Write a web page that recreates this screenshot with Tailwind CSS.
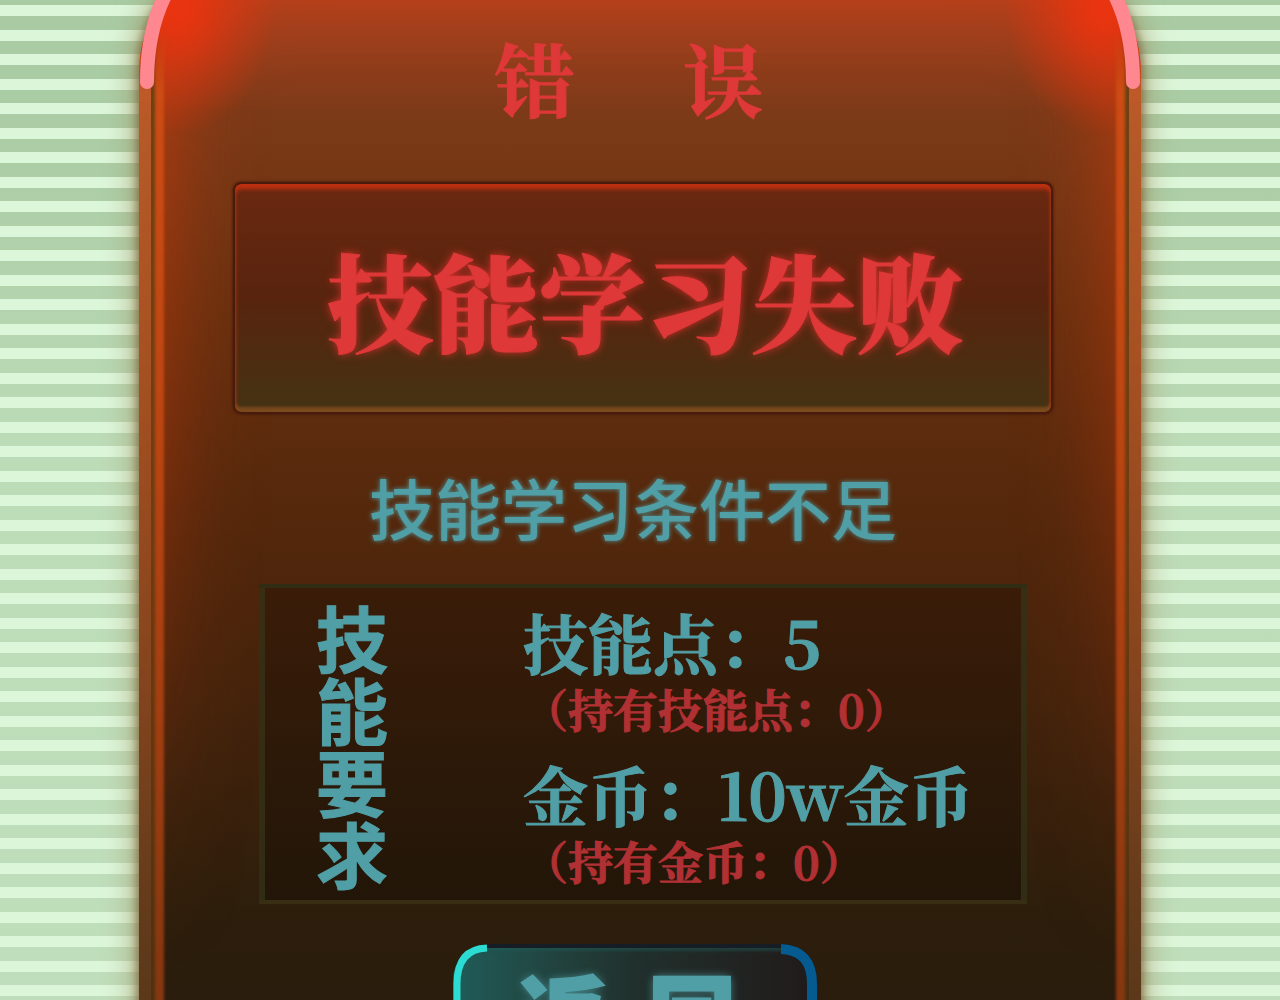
<!DOCTYPE html>
<html lang="zh-CN">
<head>
  <meta charset="UTF-8" />
  <title>技能学习失败</title>
  <meta name="viewport" content="width=device-width, initial-scale=1.0" />
  <script src="https://cdn.jsdelivr.net/npm/@tailwindcss/browser@4"></script>
</head>
<body class="min-h-screen overflow-x-hidden bg-[#dcf6d9] bg-[linear-gradient(to_bottom,#a9cba3_0px,#a9cba3_5px,#dcf6d9_5px,#dcf6d9_16px,#a9cba3_16px,#a9cba3_30px,#dcf6d9_30px,#dcf6d9_41px,#a9cba3_41px,#a9cba3_49px)] bg-[length:100%_49px] font-['Noto_Serif_CJK_SC','Liberation_Serif','Noto_Sans_CJK_SC',serif]">

  <div class="min-h-screen overflow-hidden bg-[linear-gradient(to_bottom,#dcf6d900_0px,#dcf6d910_180px,#dcf6d960_450px,#dcf6d970_1000px)]">

    <!-- dialog -->
    <main class="relative mx-auto -mt-12 w-full max-w-[1002px] rounded-t-[120px] bg-[linear-gradient(to_bottom,#ac4220_48px,#7c3a18_160px,#68300f_360px,#55280c_560px,#43230c_760px,#2d1e0c_960px,#2a1c0c_1060px)] pt-12 pr-[88px] pl-[94px] shadow-[0_0_8px_2px_#7a6238cc,0_0_26px_8px_#a08a5a90]">

      <!-- side glow -->
      <div class="absolute inset-0 rounded-t-[120px] shadow-[inset_0_0_90px_24px_#d03c0cd0] mask-[linear-gradient(to_bottom,#000_15%,#0009_45%,#0002_75%,#0000_90%)]"></div>
      <div class="absolute inset-0 rounded-t-[120px] bg-[radial-gradient(ellipse_100px_130px_at_38px_54px,#e83410_10%,#e8341080_50%,#e8341000),radial-gradient(ellipse_100px_130px_at_964px_54px,#e83410_10%,#e8341080_50%,#e8341000)]"></div>

      <!-- side rails -->
      <div class="absolute inset-0 rounded-t-[120px] border-x-[12px] border-[#c07038]/60 shadow-[inset_4px_0_3px_#6a4214,inset_-4px_0_3px_#6a4214,inset_13px_0_3px_#cc4c14,inset_-13px_0_3px_#cc4c14] mask-[linear-gradient(to_bottom,#0000_80px,#000_140px,#000b_50%,#0008_100%)]"></div>

      <!-- lit corners -->
      <svg class="absolute top-12 left-0 h-[100px] w-[60px]" viewBox="0 0 60 100" fill="none" stroke="#ff8790" stroke-width="14" stroke-linecap="round"><path d="M8 82C8 46 14 16 30 -12" /></svg>
      <svg class="absolute top-12 right-0 h-[100px] w-[60px]" viewBox="0 0 60 100" fill="none" stroke="#ff8790" stroke-width="14" stroke-linecap="round"><path d="M52 82C52 46 46 16 30 -12" /></svg>

      <div class="relative flex flex-col items-center">
        <h2 class="flex gap-27 pt-8 pr-7 text-[80px] leading-[90px] font-bold text-[#de3838] [-webkit-text-stroke:1px]"><span>错</span><span>误</span></h2>

        <div class="mt-[60px] flex h-[232px] w-full items-center justify-center rounded-lg border-2 border-[#4a1b0c] bg-linear-to-b from-[#6b2810] via-[#58240e] to-[#433213] pl-1 shadow-[inset_0_5px_4px_#c03010,inset_0_-5px_3px_#7a4a1c,0_0_3px_#3a1408]">
          <h1 class="text-[106px] leading-[120px] font-black whitespace-nowrap text-[#de3838] [-webkit-text-stroke:1px] [text-shadow:0_0_8px_#e03030]">技能学习失败</h1>
        </div>

        <p class="mt-[52px] pr-5 font-['Noto_Sans_CJK_SC',sans-serif] text-[66px] leading-[80px] font-medium whitespace-nowrap text-[#519fa6] [text-shadow:0_0_5px_#519fa6]">技能学习条件不足</p>

        <section class="mt-[38px] flex w-[768px] gap-[128px] border-x-6 border-y-4 border-[#38361a]/70 bg-linear-to-b from-[#3a1c08] to-[#221608] py-3 pl-[44px] text-[#519fa6]">
          <h3 class="w-[86px] text-center font-['Noto_Sans_CJK_SC',sans-serif] text-[72px] leading-[72px] font-bold [-webkit-text-stroke:1px]">技能要求</h3>
          <div class="font-bold whitespace-nowrap [-webkit-text-stroke:1px]">
            <p class="text-[65px] leading-[82px]">技能点：5</p>
            <p class="text-[45px] leading-[54px] text-[#b03033]">（持有技能点：0）</p>
            <p class="mt-4 text-[65px] leading-[82px]">金币：10w金币</p>
            <p class="text-[45px] leading-[54px] text-[#b03033]">（持有金币：0）</p>
          </div>
        </section>

        <button type="button" class="relative mt-10 mr-[16px] flex h-[140px] w-[364px] justify-center gap-[44px] rounded-[34px] border-t-4 border-[#171d24] bg-linear-to-r from-[#1f5c58] via-[#20302c] to-[#201a1a] pt-4 pr-4 font-['Noto_Sans_CJK_SC',sans-serif] text-[86px] leading-[96px] font-black text-[#519fa6] shadow-[inset_0_3px_3px_#1f5c5880] [-webkit-text-stroke:3px] [text-shadow:0_0_10px_#519fa6]">
          <svg class="absolute -top-1 left-0 h-[140px] w-9" viewBox="0 0 36 140" fill="none" stroke="#2cdcd2" stroke-width="7"><path d="M34 4Q4 5 4 40V140" /></svg>
          <svg class="absolute -top-1 right-0 h-[140px] w-9" viewBox="0 0 36 140" fill="none" stroke="#055a90" stroke-width="10"><path d="M0 5Q31 6 31 40V140" /></svg>
          <span>返</span><span>回</span>
        </button>
      </div>
    </main>
  </div>

</body>
</html>
